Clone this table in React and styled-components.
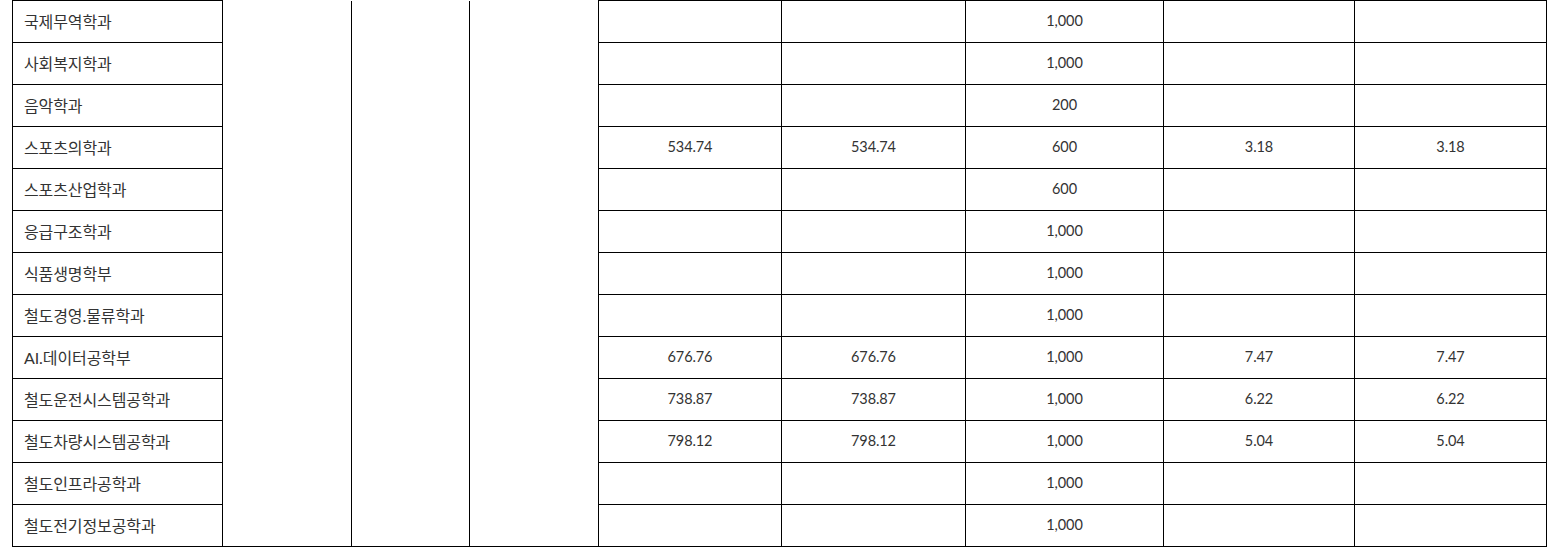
import styled, { createGlobalStyle } from 'styled-components';

const GlobalStyle = createGlobalStyle`
  body {
    margin: 0;
    background: #ffffff;
    font-family: 'Lato', 'Noto Sans CJK KR', sans-serif;
  }
`;

const Wrap = styled.div`
  padding: 0 12px;
`;

const Table = styled.table`
  border-collapse: collapse;
  table-layout: fixed;
  width: 1534px;
  color: #333333;
`;

const Row = styled.tr`
  height: 42px;
`;

const Cell = styled.td`
  border: 1px solid #000000;
  padding: ${(p) => (p.$left ? '0 0 2px 11px' : '0 4px 2px')};
  text-align: ${(p) => (p.$left ? 'left' : 'center')};
  font-size: ${(p) => (p.$left ? '16px' : '14.5px')};
  letter-spacing: ${(p) => (p.$left ? '-0.1px' : '-0.1px')};
  vertical-align: middle;
  white-space: nowrap;
`;

const SpanCell = styled.td`
  border: 1px solid #000000;
  border-top: none;
`;

const widths = [210, 129, 118, 129, 183, 184, 198, 191, 192];

const rows = [
  ['국제무역학과', '', '', '1,000', '', ''],
  ['사회복지학과', '', '', '1,000', '', ''],
  ['음악학과', '', '', '200', '', ''],
  ['스포츠의학과', '534.74', '534.74', '600', '3.18', '3.18'],
  ['스포츠산업학과', '', '', '600', '', ''],
  ['응급구조학과', '', '', '1,000', '', ''],
  ['식품생명학부', '', '', '1,000', '', ''],
  ['철도경영.물류학과', '', '', '1,000', '', ''],
  ['AI.데이터공학부', '676.76', '676.76', '1,000', '7.47', '7.47'],
  ['철도운전시스템공학과', '738.87', '738.87', '1,000', '6.22', '6.22'],
  ['철도차량시스템공학과', '798.12', '798.12', '1,000', '5.04', '5.04'],
  ['철도인프라공학과', '', '', '1,000', '', ''],
  ['철도전기정보공학과', '', '', '1,000', '', ''],
];

export default function App() {
  return (
    <>
      <GlobalStyle />
      <Wrap>
        <Table>
          <colgroup>
            {widths.map((w, i) => (
              <col key={i} style={{ width: w }} />
            ))}
          </colgroup>
          <tbody>
            {rows.map((r, i) => (
              <Row key={i}>
                <Cell $left>{r[0]}</Cell>
                {i === 0 && (
                  <>
                    <SpanCell rowSpan={rows.length} />
                    <SpanCell rowSpan={rows.length} />
                    <SpanCell rowSpan={rows.length} />
                  </>
                )}
                {r.slice(1).map((v, j) => (
                  <Cell key={j}>{v}</Cell>
                ))}
              </Row>
            ))}
          </tbody>
        </Table>
      </Wrap>
    </>
  );
}
